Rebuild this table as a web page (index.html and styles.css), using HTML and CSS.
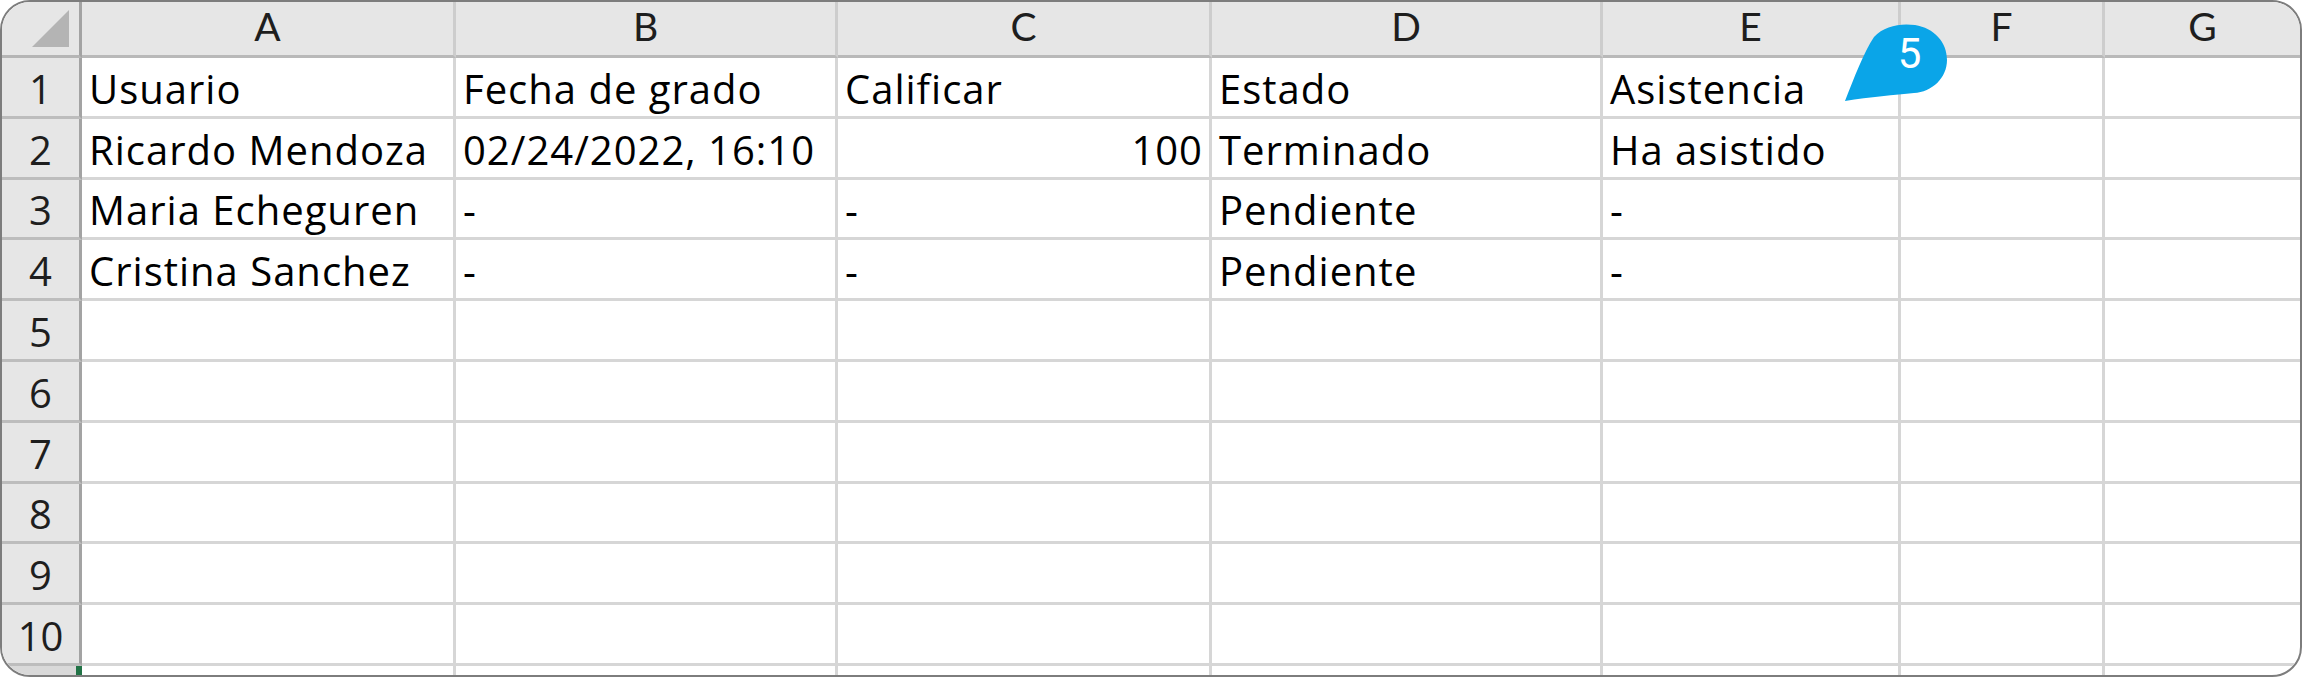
FILE: index.html
```html
<!DOCTYPE html>
<html lang="es">
<head>
<meta charset="utf-8">
<title>Hoja de cálculo</title>
<link rel="stylesheet" href="styles.css">
</head>
<body>
<div class="frame">
  <div class="sheet">
    <div class="corner"><span class="selall"></span></div>
    <div class="colhdr">A</div>
    <div class="colhdr">B</div>
    <div class="colhdr">C</div>
    <div class="colhdr">D</div>
    <div class="colhdr">E</div>
    <div class="colhdr">F</div>
    <div class="colhdr last">G</div>

    <div class="rowhdr">1</div>
    <div class="cell">Usuario</div>
    <div class="cell">Fecha de grado</div>
    <div class="cell">Calificar</div>
    <div class="cell">Estado</div>
    <div class="cell">Asistencia</div>
    <div class="cell"></div>
    <div class="cell last"></div>

    <div class="rowhdr">2</div>
    <div class="cell">Ricardo Mendoza</div>
    <div class="cell">02/24/2022, 16:10</div>
    <div class="cell num">100</div>
    <div class="cell">Terminado</div>
    <div class="cell">Ha asistido</div>
    <div class="cell"></div>
    <div class="cell last"></div>

    <div class="rowhdr">3</div>
    <div class="cell">Maria Echeguren</div>
    <div class="cell">-</div>
    <div class="cell">-</div>
    <div class="cell">Pendiente</div>
    <div class="cell">-</div>
    <div class="cell"></div>
    <div class="cell last"></div>

    <div class="rowhdr">4</div>
    <div class="cell">Cristina Sanchez</div>
    <div class="cell">-</div>
    <div class="cell">-</div>
    <div class="cell">Pendiente</div>
    <div class="cell">-</div>
    <div class="cell"></div>
    <div class="cell last"></div>

    <div class="rowhdr">5</div>
    <div class="cell"></div><div class="cell"></div><div class="cell"></div><div class="cell"></div><div class="cell"></div><div class="cell"></div><div class="cell last"></div>
    <div class="rowhdr">6</div>
    <div class="cell"></div><div class="cell"></div><div class="cell"></div><div class="cell"></div><div class="cell"></div><div class="cell"></div><div class="cell last"></div>
    <div class="rowhdr">7</div>
    <div class="cell"></div><div class="cell"></div><div class="cell"></div><div class="cell"></div><div class="cell"></div><div class="cell"></div><div class="cell last"></div>
    <div class="rowhdr">8</div>
    <div class="cell"></div><div class="cell"></div><div class="cell"></div><div class="cell"></div><div class="cell"></div><div class="cell"></div><div class="cell last"></div>
    <div class="rowhdr">9</div>
    <div class="cell"></div><div class="cell"></div><div class="cell"></div><div class="cell"></div><div class="cell"></div><div class="cell"></div><div class="cell last"></div>
    <div class="rowhdr">10</div>
    <div class="cell"></div><div class="cell"></div><div class="cell"></div><div class="cell"></div><div class="cell"></div><div class="cell"></div><div class="cell last"></div>

    <div class="rowhdr stub"><span class="sel"></span></div>
    <div class="cell stub"></div><div class="cell stub"></div><div class="cell stub"></div><div class="cell stub"></div><div class="cell stub"></div><div class="cell stub"></div><div class="cell stub last"></div>
  </div>

  <svg class="badge" viewBox="0 0 120 90" width="120" height="90">
    <path d="M5 81 C14 58 24 32 34 17 C44 6 60 3 75 5 C94 8 107 22 107 40 C107 58 92 72 74 73 C55 75 30 77 5 81 Z" fill="#0aa5e8"/>
    <text x="69.5" y="48" text-anchor="middle" class="badge-num">5</text>
  </svg>
</div>
</body>
</html>
```

FILE: styles.css
```css
html, body {
  margin: 0;
  padding: 0;
  background: #ffffff;
}

.frame {
  position: relative;
  width: 2302px;
  height: 677px;
  box-sizing: border-box;
  border: 2px solid #7d7d7d;
  border-radius: 30px;
  overflow: hidden;
  background: #ffffff;
}

.sheet {
  display: grid;
  grid-template-columns: 80px 374px 382px 374px 391px 298px 204px 1fr;
  grid-template-rows: 56px repeat(10, 60.8px) 1fr;
  width: 100%;
  height: 100%;
  font-family: "Open Sans", "Noto Sans", sans-serif;
  font-size: 40px;
  letter-spacing: 1px;
  color: #000000;
}

.corner {
  box-sizing: border-box;
  background: #e6e6e6;
  border-right: 3px solid #a3a3a3;
  border-bottom: 3px solid #b5b5b5;
  display: flex;
  justify-content: flex-end;
  align-items: flex-end;
  padding: 0 10px 8px 0;
}

.selall {
  display: block;
  width: 37px;
  height: 37px;
  background: #b4b4b4;
  clip-path: polygon(100% 0, 100% 100%, 0 100%);
}

.colhdr {
  box-sizing: border-box;
  background: #e6e6e6;
  border-right: 3px solid #cdcdcd;
  border-bottom: 3px solid #b9b9b9;
  display: flex;
  justify-content: center;
  align-items: flex-end;
  padding-bottom: 9px;
  font-family: "Lato", "Open Sans", sans-serif;
  font-size: 39px;
  color: #1e1e1e;
  line-height: 1;
  letter-spacing: 0;
}

.colhdr.last {
  border-right: none;
}

.rowhdr {
  box-sizing: border-box;
  background: #e6e6e6;
  border-right: 3px solid #a3a3a3;
  border-bottom: 3px solid #bdbdbd;
  display: flex;
  justify-content: center;
  align-items: flex-end;
  padding-bottom: 7px;
  color: #1e1e1e;
  line-height: 1;
  letter-spacing: 0;
}

.cell {
  box-sizing: border-box;
  border-right: 3px solid #d6d6d6;
  border-bottom: 3px solid #d6d6d6;
  display: flex;
  align-items: flex-end;
  padding: 0 6px 7px 7px;
  white-space: nowrap;
  line-height: 1;
}

.cell.last {
  border-right: none;
}

.cell.num {
  justify-content: flex-end;
}

.stub {
  border-bottom: none;
}

.rowhdr.stub {
  background: #d9d9d9;
  padding: 0;
  justify-content: flex-end;
  align-items: stretch;
  border-right: none;
}

.sel {
  display: block;
  width: 6px;
  background: #217346;
}

.badge {
  position: absolute;
  left: 1838px;
  top: 18px;
  overflow: visible;
}

.badge-num {
  font-family: "Roboto", "Liberation Sans", sans-serif;
  font-size: 42px;
  fill: #ffffff;
}
```
